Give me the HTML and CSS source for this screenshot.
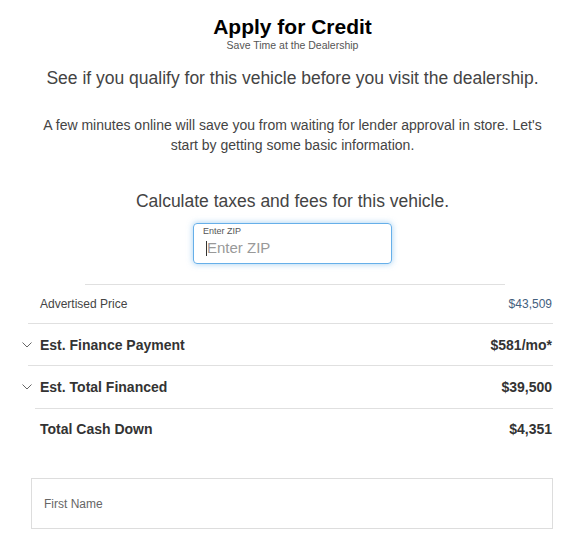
FILE: index.html
```html
<!DOCTYPE html>
<html lang="en">
<head>
    <meta charset="UTF-8">
    <meta name="viewport" content="width=device-width, initial-scale=1.0">
    <title>Apply for Credit</title>
    <link rel="stylesheet" href="styles.css">
</head>
<body>

    <div class="container">
        <h1>Apply for Credit</h1>
        <div class="subtitle">Save Time at the Dealership</div>

        <p class="lead">See if you qualify for this vehicle before you visit the dealership.</p>

        <p class="intro">A few minutes online will save you from waiting for lender approval in store. Let's start by getting some basic information.</p>

        <h2 class="calc-title">Calculate taxes and fees for this vehicle.</h2>

        <div class="zip-field">
            <label for="zip">Enter ZIP</label>
            <div class="zip-line">
                <span class="caret"></span>
                <input id="zip" type="text" placeholder="Enter ZIP">
            </div>
        </div>

        <hr class="short-rule">

        <div class="summary">
            <div class="row row-plain">
                <span class="label">Advertised Price</span>
                <span class="value price">$43,509</span>
            </div>
            <div class="row">
                <span class="label strong">
                    <svg class="chevron" width="10" height="6" viewBox="0 0 10 6"><polyline points="0.5,0.5 5,5 9.5,0.5" fill="none" stroke="#666" stroke-width="1"/></svg>
                    Est. Finance Payment
                </span>
                <span class="value strong">$581/mo*</span>
            </div>
            <div class="row row-indent">
                <span class="label strong">
                    <svg class="chevron" width="10" height="6" viewBox="0 0 10 6"><polyline points="0.5,0.5 5,5 9.5,0.5" fill="none" stroke="#666" stroke-width="1"/></svg>
                    Est. Total Financed
                </span>
                <span class="value strong">$39,500</span>
            </div>
            <div class="row last">
                <span class="label strong">Total Cash Down</span>
                <span class="value strong">$4,351</span>
            </div>
        </div>

        <div class="name-field">
            <input type="text" placeholder="First Name">
        </div>
    </div>

</body>
</html>
```

FILE: styles.css
```css
body {
    font-family: "Liberation Sans", Arial, sans-serif;
    background-color: #fff;
    margin: 0;
    padding: 0;
    color: #444;
}

.container {
    width: 525px;
    margin: 0 auto;
    padding-top: 15px;
    text-align: center;
}

h1 {
    margin: 0;
    font-size: 21px;
    line-height: 24px;
    font-weight: bold;
    color: #000;
}

.subtitle {
    font-size: 10.5px;
    line-height: 12px;
    color: #555;
}

.lead {
    margin: 16px 0 0;
    font-size: 17.5px;
    line-height: 22px;
    color: #444;
}

.intro {
    margin: 26px 8px 0;
    font-size: 14px;
    line-height: 20px;
    color: #444;
}

.calc-title {
    margin: 35px 0 0;
    font-size: 17.5px;
    line-height: 22px;
    font-weight: normal;
    color: #444;
}

.zip-field {
    width: 199px;
    height: 41px;
    box-sizing: border-box;
    margin: 11px auto 0;
    padding: 2px 9px 0;
    border: 1px solid #66afe9;
    border-radius: 4px;
    box-shadow: 0 0 6px rgba(102, 175, 233, 0.6);
    text-align: left;
}

.zip-field label {
    display: block;
    font-size: 9px;
    line-height: 11px;
    color: #555;
}

.zip-line {
    display: flex;
    align-items: center;
    padding-left: 3px;
}

.caret {
    width: 1px;
    height: 15px;
    background-color: #333;
}

.zip-line input {
    flex: 1;
    min-width: 0;
    border: none;
    outline: none;
    padding: 0;
    font-family: inherit;
    font-size: 15px;
    line-height: 22px;
    color: #444;
    background: transparent;
}

.zip-line input::placeholder {
    color: #999;
}

.short-rule {
    width: 420px;
    margin: 20px 0 0 55px;
    border: none;
    border-top: 1px solid #e0e0e0;
}

.summary {
    text-align: left;
    margin: 0 2px 0 -2px;
}

.row {
    display: flex;
    justify-content: space-between;
    align-items: center;
    height: 41px;
    padding: 0 1px 0 12px;
    border-bottom: 1px solid #e0e0e0;
}

.row-plain {
    height: 38px;
}

.row.last {
    border-bottom: none;
}

/* the divider under this row starts a little further in */
.row-indent {
    position: relative;
    height: 42px;
    box-sizing: border-box;
    border-bottom: none;
}

.row-indent::after {
    content: "";
    position: absolute;
    left: 7px;
    right: 0;
    bottom: -1px;
    border-bottom: 1px solid #e0e0e0;
}

.label {
    font-size: 12px;
    color: #444;
    display: flex;
    align-items: center;
}

.value {
    font-size: 12px;
    color: #555;
}

.price {
    color: #44607e;
}

.strong {
    font-size: 14px;
    font-weight: bold;
    color: #333;
}

.chevron {
    margin-left: -18px;
    margin-right: 8px;
}

.name-field {
    margin: 29px 2px 0 1px;
    height: 51px;
    border: 1px solid #ddd;
    box-sizing: border-box;
    display: flex;
    align-items: center;
    padding-left: 12px;
}

.name-field input {
    flex: 1;
    border: none;
    outline: none;
    padding: 0;
    font-family: inherit;
    font-size: 12px;
    background: transparent;
}

.name-field input::placeholder {
    color: #666;
}
```
